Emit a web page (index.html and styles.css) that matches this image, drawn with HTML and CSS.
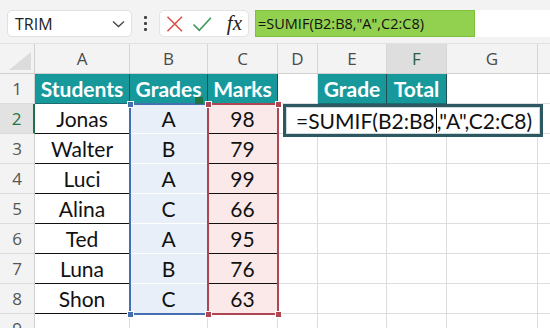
FILE: index.html
```html
<!DOCTYPE html>
<html>
<head>
<meta charset="utf-8">
<link rel="stylesheet" href="styles.css">
</head>
<body>
<div class="toolbar">
  <div class="namebox">
    <span class="nb-text">TRIM</span>
    <svg class="chev" width="13" height="8" viewBox="0 0 13 8"><path d="M1 1.5 L6.5 6.5 L12 1.5" fill="none" stroke="#444" stroke-width="1.3"/></svg>
  </div>
  <div class="dots"><span></span><span></span><span></span></div>
  <div class="fxbox">
    <svg width="18" height="18" viewBox="0 0 18 18"><path d="M1.5 1.5 L16.5 16.5 M16.5 1.5 L1.5 16.5" stroke="#d9534f" stroke-width="1.7" fill="none"/></svg>
    <svg width="21" height="18" viewBox="0 0 21 18"><path d="M1.5 9.5 L7.5 15.5 L19.5 2.5" stroke="#3e9a5e" stroke-width="1.7" fill="none"/></svg>
    <span class="fx">fx</span>
  </div>
  <div class="fbar"><span class="fbar-text">=SUMIF(B2:B8,"A",C2:C8)</span></div>
</div>

<div class="sheet">
  <div class="grid">
    <div class="c corner"><svg width="22" height="18" viewBox="0 0 22 18"><polygon points="22,0 22,18 0,18" fill="#dcdcdc"/></svg></div>
    <div class="c ch">A</div><div class="c ch">B</div><div class="c ch">C</div><div class="c ch">D</div><div class="c ch">E</div><div class="c ch active">F</div><div class="c ch">G</div><div class="c ch"></div>

    <div class="c rh">1</div>
    <div class="c th">Students</div><div class="c th">Grades</div><div class="c th">Marks</div><div class="c"></div><div class="c th">Grade</div><div class="c th">Total</div><div class="c"></div><div class="c"></div>

    <div class="c rh rh-active">2</div>
    <div class="c ta">Jonas</div><div class="c tb">A</div><div class="c tc">98</div><div class="c"></div><div class="c"></div><div class="c"></div><div class="c"></div><div class="c"></div>

    <div class="c rh">3</div>
    <div class="c ta">Walter</div><div class="c tb">B</div><div class="c tc">79</div><div class="c"></div><div class="c"></div><div class="c"></div><div class="c"></div><div class="c"></div>

    <div class="c rh">4</div>
    <div class="c ta">Luci</div><div class="c tb">A</div><div class="c tc">99</div><div class="c"></div><div class="c"></div><div class="c"></div><div class="c"></div><div class="c"></div>

    <div class="c rh">5</div>
    <div class="c ta">Alina</div><div class="c tb">C</div><div class="c tc">66</div><div class="c"></div><div class="c"></div><div class="c"></div><div class="c"></div><div class="c"></div>

    <div class="c rh">6</div>
    <div class="c ta">Ted</div><div class="c tb">A</div><div class="c tc">95</div><div class="c"></div><div class="c"></div><div class="c"></div><div class="c"></div><div class="c"></div>

    <div class="c rh">7</div>
    <div class="c ta">Luna</div><div class="c tb">B</div><div class="c tc">76</div><div class="c"></div><div class="c"></div><div class="c"></div><div class="c"></div><div class="c"></div>

    <div class="c rh">8</div>
    <div class="c ta">Shon</div><div class="c tb last">C</div><div class="c tc">63</div><div class="c"></div><div class="c"></div><div class="c"></div><div class="c"></div><div class="c"></div>

    <div class="c rh">9</div>
    <div class="c"></div><div class="c"></div><div class="c"></div><div class="c"></div><div class="c"></div><div class="c"></div><div class="c"></div><div class="c"></div>
  </div>

  <div class="range range-b"></div>
  <div class="range range-c"></div>
  <div class="handle hb" style="left:127px;top:57px"></div>
  <div class="handle hb" style="left:127px;top:267px"></div>
  <div class="handle hg" style="left:195px;top:53px"></div>
  <div class="handle hc" style="left:205px;top:57px"></div>
  <div class="handle hc" style="left:275px;top:57px"></div>
  <div class="handle hc" style="left:205px;top:267px"></div>
  <div class="handle hc" style="left:275px;top:267px"></div>

  <div class="editbox"><span class="caret">=SUMIF(B2:B8</span>,"A",C2:C8)</div>
</div>
</body>
</html>
```

FILE: styles.css
```css
* { box-sizing: border-box; }
html, body {
  margin: 0;
  padding: 0;
  width: 550px;
  height: 328px;
  overflow: hidden;
  background: #ffffff;
}
.toolbar {
  height: 44px;
  background: #f3f3f3;
  display: flex;
  align-items: flex-start;
  padding: 10px 0 0 7px;
  border-bottom: 1px solid #e2e2e2;
}
.namebox {
  width: 125px;
  height: 27px;
  background: #fff;
  border: 1px solid #e0e0e0;
  border-radius: 5px;
  display: flex;
  align-items: center;
  justify-content: space-between;
  padding: 0 6px 0 7px;
  font-family: "Open Sans", "Noto Sans", sans-serif;
  font-size: 16px;
  color: #222;
}
.dots {
  width: 27px;
  height: 27px;
  display: flex;
  flex-direction: column;
  align-items: center;
  justify-content: center;
  gap: 3px;
}
.dots span {
  width: 3px;
  height: 3px;
  background: #444;
  border-radius: 1px;
}
.fxbox {
  width: 90px;
  height: 27px;
  background: #fff;
  border: 1px solid #e3e3e3;
  border-radius: 5px;
  display: flex;
  align-items: center;
  padding: 0 6px 0 6px;
  gap: 9px;
}
.fx {
  font-family: "Liberation Serif", "DejaVu Serif", serif;
  font-style: italic;
  font-size: 21px;
  color: #222;
  margin-left: 5px;
  line-height: 1;
}
.fbar {
  margin-left: 6px;
  flex: 1;
  height: 27px;
  background: #fff;
  display: flex;
}
.fbar-text {
  width: 220px;
  height: 27px;
  background: #92d050;
  border: 1px solid #7fbf3e;
  font-family: "Open Sans", "Noto Sans", sans-serif;
  font-size: 14.5px;
  color: #111;
  display: flex;
  align-items: center;
  padding-left: 2px;
}
.sheet {
  position: relative;
}
.grid {
  display: grid;
  grid-template-columns: 35px 95px 78px 70px 40px 69px 60px 91px 30px;
  grid-auto-rows: 30px;
}
.c {
  border-right: 1px solid #dedede;
  border-bottom: 1px solid #dedede;
  display: flex;
  align-items: center;
  justify-content: center;
  font-family: "Lato", "Liberation Sans", sans-serif;
  font-size: 21px;
  color: #111;
  overflow: hidden;
  white-space: nowrap;
}
.corner {
  background: #f3f3f3;
  align-items: flex-end;
  justify-content: flex-end;
  padding: 0 3px 3px 0;
  border-right: 1px solid #d0d0d0;
  border-bottom: 1px solid #d0d0d0;
}
.ch {
  background: #f3f3f3;
  font-family: "Open Sans", "Noto Sans", sans-serif;
  font-size: 17px;
  color: #4a4a4a;
  border-right: 1px solid #d6d6d6;
  border-bottom: 1px solid #d0d0d0;
}
.ch.active {
  background: #dedede;
  color: #2c5e3e;
}
.rh {
  background: #f3f3f3;
  font-family: "Open Sans", "Noto Sans", sans-serif;
  font-size: 17px;
  color: #555;
  border-right: 1px solid #d0d0d0;
  border-bottom: 1px solid #dcdcdc;
}
.rh.rh-active {
  background: #e2e2e2;
  color: #217346;
  border-right: 2px solid #217346;
}
.th {
  background: #17999b;
  color: #fff;
  font-weight: 700;
  border-right: 1px solid #1f4f55;
  border-bottom: 1px solid #1b6e70;
}
.ta {
  border-bottom: 1px solid #111;
}
.tb {
  background: #e9eff9;
  border-bottom: 1px solid #ffffff;
}
.tc {
  background: #fbe9ea;
  border-bottom: 1px solid #111;
}
.range {
  position: absolute;
  top: 59px;
  height: 212px;
}
.range-b {
  left: 129px;
  width: 80px;
  border: 2px solid #4470b0;
}
.range-c {
  left: 207px;
  width: 72px;
  border: 2px solid #b04552;
}
.handle {
  position: absolute;
  width: 7px;
  height: 7px;
  border: 1px solid #fff;
}
.hb { background: #4470b0; }
.hc { background: #b04552; }
.hg { background: #217346; border: none; width: 8px; }
.editbox {
  position: absolute;
  left: 283px;
  top: 60px;
  width: 260px;
  height: 33px;
  background: #fff;
  border: 3px solid #2d5862;
  box-shadow: inset 0 0 0 1px #cfdadc;
  font-family: "Lato", "Liberation Sans", sans-serif;
  font-size: 21px;
  color: #111;
  padding-left: 10px;
  line-height: 27px;
  white-space: nowrap;
}
.caret {
  border-right: 1px solid #000;
  padding-right: 1px;
}
```
